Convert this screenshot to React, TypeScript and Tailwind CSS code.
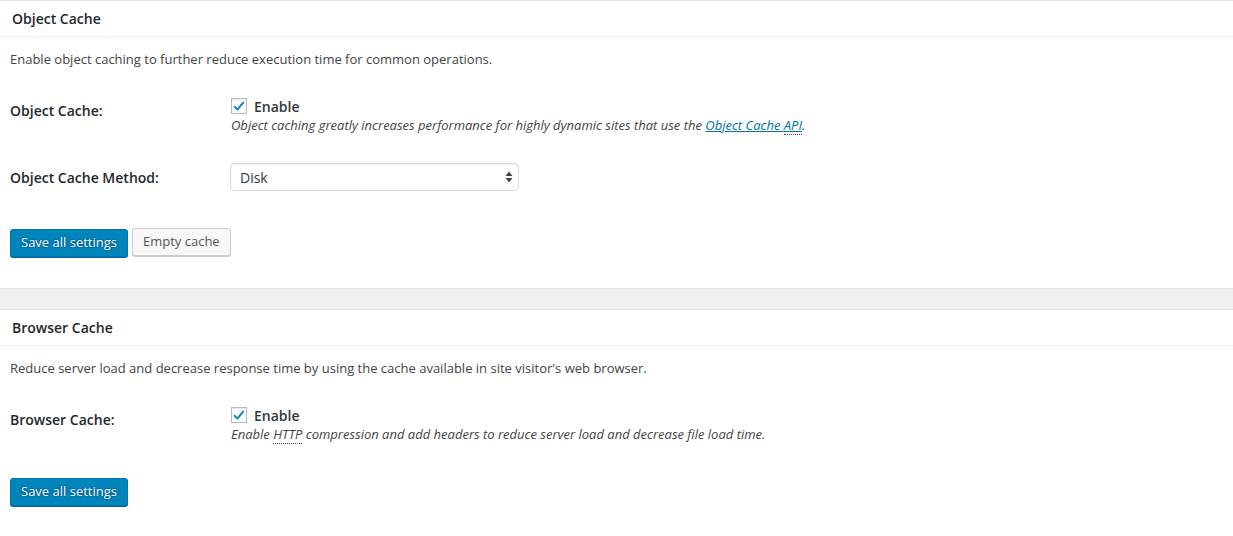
import { ReactNode } from 'react'

const font = { fontFamily: '"Open Sans", "Noto Sans", sans-serif' }

const Checkbox = () => (
  <span className="flex h-4 w-4 items-center justify-center border border-[#b4b9be] bg-white shadow-[inset_0_1px_2px_rgba(0,0,0,0.1)]">
    <svg viewBox="0 0 16 16" className="h-[15px] w-[15px]">
      <path d="M3 8.2 L6.2 11.4 L12.8 3.6" fill="none" stroke="#1e8cbe" strokeWidth="2.4" strokeLinecap="round" strokeLinejoin="round" />
    </svg>
  </span>
)

const PrimaryButton = ({ children }: { children: ReactNode }) => (
  <button className="h-[28px] rounded-[3px] border border-[#0073aa] bg-[#0085ba] px-[10px] pb-px text-[13px] text-white shadow-[0_1px_0_#006799] [text-shadow:0_-1px_1px_#006799,1px_0_1px_#006799,0_1px_1px_#006799,-1px_0_1px_#006799]">
    {children}
  </button>
)

const SecondaryButton = ({ children }: { children: ReactNode }) => (
  <button className="-mt-px h-[28px] rounded-[3px] border border-[#cccccc] bg-[#f7f7f7] px-[10px] pb-px text-[13px] text-[#555555] shadow-[0_1px_0_#cccccc]">
    {children}
  </button>
)

const Abbr = ({ children }: { children: ReactNode }) => (
  <span className="border-b border-dotted border-[#444]">{children}</span>
)

const Row = ({ label, children }: { label: string; children: ReactNode }) => (
  <div className="flex">
    <div className="w-[220px] pt-[4px] text-[14px] leading-[18px] font-semibold text-[#23282d]">{label}</div>
    <div className="flex-1">{children}</div>
  </div>
)

const EnableField = ({ hint }: { hint: ReactNode }) => (
  <div className="pl-px">
    <label className="flex h-4 items-center gap-[7px]">
      <Checkbox />
      <span className="text-[14px] font-semibold text-[#32373c]">Enable</span>
    </label>
    <p className="mt-[2px] text-[13px] leading-[19px] italic text-[#444]">{hint}</p>
  </div>
)

const Panel = ({ title, children }: { title: string; children: ReactNode }) => (
  <section className="border-y border-[#e5e5e5] bg-white">
    <h3 className="flex h-[36px] items-center border-b border-[#eeeeee] px-3 text-[14px] font-semibold text-[#23282d]">
      {title}
    </h3>
    <div className="px-[10px] pb-[31px]">{children}</div>
  </section>
)

export default function App() {
  return (
    <div className="flex min-h-screen flex-col gap-5 bg-[#f1f1f1]" style={font}>
      <Panel title="Object Cache">
        <p className="mt-3 text-[13px] leading-5 text-[#444]">
          Enable object caching to further reduce execution time for common operations.
        </p>
        <div className="mt-[29px]">
          <Row label="Object Cache:">
            <EnableField
              hint={
                <>
                  Object caching greatly increases performance for highly dynamic sites that use the{' '}
                  <a href="#" className="text-[#0073aa] underline">
                    Object Cache <Abbr>API</Abbr>
                  </a>
                  .
                </>
              }
            />
          </Row>
        </div>
        <div className="mt-[28px] flex items-center">
          <div className="w-[220px] text-[14px] font-semibold text-[#23282d]">Object Cache Method:</div>
          <div className="relative h-[28px] w-[289px]">
            <select className="h-full w-full appearance-none rounded-[4px] border border-[#dddddd] bg-white pl-[9px] text-[14px] text-[#32373c] shadow-[inset_0_1px_2px_rgba(0,0,0,0.07)] outline-none">
              <option>Disk</option>
            </select>
            <svg viewBox="0 0 8 12" className="pointer-events-none absolute top-[8px] right-[6px] h-[12px] w-[8px]">
              <path d="M4 0.5 L7.5 5 L0.5 5 Z M0.5 7 L7.5 7 L4 11.5 Z" fill="#444" />
            </svg>
          </div>
        </div>
        <div className="mt-[38px] flex items-start gap-1">
          <PrimaryButton>Save all settings</PrimaryButton>
          <SecondaryButton>Empty cache</SecondaryButton>
        </div>
      </Panel>
      <Panel title="Browser Cache">
        <p className="mt-3 text-[13px] leading-5 text-[#444]">
          Reduce server load and decrease response time by using the cache available in site visitor's web browser.
        </p>
        <div className="mt-[29px]">
          <Row label="Browser Cache:">
            <EnableField
              hint={
                <>
                  Enable <Abbr>HTTP</Abbr> compression and add headers to reduce server load and decrease file load time.
                </>
              }
            />
          </Row>
        </div>
        <div className="mt-[34px] flex">
          <PrimaryButton>Save all settings</PrimaryButton>
        </div>
      </Panel>
    </div>
  )
}
